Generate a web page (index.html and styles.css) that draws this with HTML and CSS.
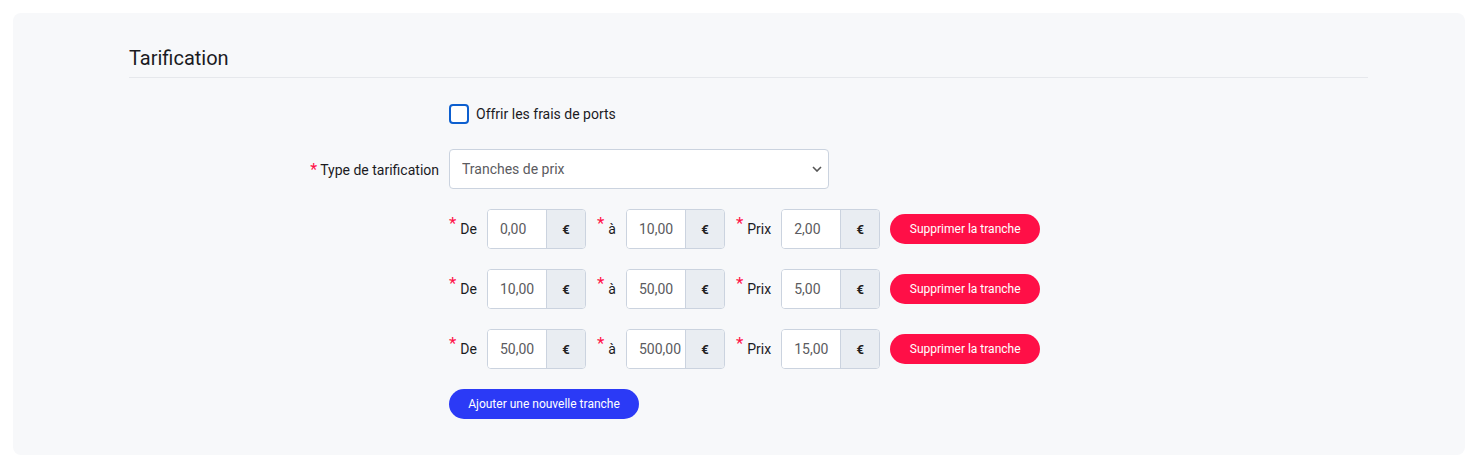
FILE: index.html
```html
<!DOCTYPE html>
<html lang="fr">
<head>
<meta charset="utf-8">
<title>Tarification</title>
<link rel="stylesheet" href="styles.css">
</head>
<body>
<div class="panel">
  <div class="content">
    <h2 class="title">Tarification</h2>
    <div class="form">
      <div class="row row-check">
        <div class="label-col"></div>
        <label class="check">
          <input type="checkbox" class="checkbox">
          <span>Offrir les frais de ports</span>
        </label>
      </div>
      <div class="row row-select">
        <div class="label-col"><span class="req">*</span>Type de tarification</div>
        <div class="select-wrap">
          <select class="select">
            <option>Tranches de prix</option>
          </select>
          <svg class="chev" width="10" height="6" viewBox="0 0 10 6"><path d="M1 1l4 4 4-4" fill="none" stroke="#555" stroke-width="1.6"/></svg>
        </div>
      </div>

      <div class="row">
        <div class="label-col"></div>
        <div class="tranche">
          <div class="field"><span class="flabel"><span class="sreq">*</span>De</span><div class="group"><input class="num" value="0,00"><span class="addon">€</span></div></div>
          <div class="field"><span class="flabel"><span class="sreq">*</span>à</span><div class="group"><input class="num" value="10,00"><span class="addon">€</span></div></div>
          <div class="field"><span class="flabel"><span class="sreq">*</span>Prix</span><div class="group"><input class="num" value="2,00"><span class="addon">€</span></div></div>
          <button class="btn btn-red">Supprimer la tranche</button>
        </div>
      </div>
      <div class="row">
        <div class="label-col"></div>
        <div class="tranche">
          <div class="field"><span class="flabel"><span class="sreq">*</span>De</span><div class="group"><input class="num" value="10,00"><span class="addon">€</span></div></div>
          <div class="field"><span class="flabel"><span class="sreq">*</span>à</span><div class="group"><input class="num" value="50,00"><span class="addon">€</span></div></div>
          <div class="field"><span class="flabel"><span class="sreq">*</span>Prix</span><div class="group"><input class="num" value="5,00"><span class="addon">€</span></div></div>
          <button class="btn btn-red">Supprimer la tranche</button>
        </div>
      </div>
      <div class="row">
        <div class="label-col"></div>
        <div class="tranche">
          <div class="field"><span class="flabel"><span class="sreq">*</span>De</span><div class="group"><input class="num" value="50,00"><span class="addon">€</span></div></div>
          <div class="field"><span class="flabel"><span class="sreq">*</span>à</span><div class="group"><input class="num" value="500,00"><span class="addon">€</span></div></div>
          <div class="field"><span class="flabel"><span class="sreq">*</span>Prix</span><div class="group"><input class="num" value="15,00"><span class="addon">€</span></div></div>
          <button class="btn btn-red">Supprimer la tranche</button>
        </div>
      </div>
      <div class="row">
        <div class="label-col"></div>
        <button class="btn btn-blue">Ajouter une nouvelle tranche</button>
      </div>
    </div>
  </div>
</div>
</body>
</html>
```

FILE: styles.css
```css
* { box-sizing: border-box; }
html, body { margin: 0; background: #fff; }
body {
  padding: 13px 13px 0 13px;
  font-family: Roboto, "Liberation Sans", Arial, sans-serif;
  color: #1b1b1f;
}
.panel {
  background: #f7f8fa;
  border-radius: 8px;
  height: 442px;
  padding: 33px 97px 0 116px;
}
.title {
  margin: 0;
  font-size: 20px;
  font-weight: 400;
  line-height: 24px;
  padding-bottom: 7px;
  border-bottom: 1px solid #e6e8ec;
  color: #1b1b1f;
}
.form {
  display: flex;
  flex-direction: column;
  margin-top: 26px;
}
.row {
  display: flex;
  align-items: center;
}
.label-col {
  width: 320px;
  flex: none;
  padding-right: 10px;
  text-align: right;
  font-size: 14px;
}
.row-check { height: 20px; }
.row-select { margin-top: 25px; margin-bottom: 20px; }
.row:nth-child(n+4) { margin-top: 20px; }
.check {
  display: flex;
  align-items: center;
  gap: 7px;
  font-size: 14px;
  cursor: pointer;
}
.checkbox {
  appearance: none;
  -webkit-appearance: none;
  margin: 0;
  width: 20px;
  height: 20px;
  border: 2px solid #0d5fcf;
  border-radius: 4px;
  background: #fff;
}
.req {
  color: #ff1048;
  font-size: 16px;
  margin-right: 3px;
}
.select-wrap {
  position: relative;
  width: 380px;
  height: 40px;
}
.select {
  appearance: none;
  -webkit-appearance: none;
  width: 100%;
  height: 40px;
  border: 1px solid #cbd3df;
  border-radius: 4px;
  background: #fff;
  padding: 0 12px;
  font-family: inherit;
  font-size: 14px;
  color: #5b5b60;
}
.chev {
  position: absolute;
  right: 7px;
  top: 17px;
}
.tranche {
  display: flex;
  align-items: center;
  gap: 11px;
}
.field {
  display: flex;
  align-items: center;
  gap: 10px;
}
.flabel {
  font-size: 14px;
  display: flex;
  align-items: flex-start;
  padding-top: 1px;
}
.sreq {
  color: #ff1048;
  font-size: 17px;
  line-height: 1;
  margin-right: 4px;
  position: relative;
  top: -6px;
}
.group {
  display: flex;
  height: 40px;
  border: 1px solid #cbd3df;
  border-radius: 4px;
  overflow: hidden;
  background: #fff;
}
.num {
  width: 58px;
  border: 0;
  padding: 0 0 0 12px;
  font-family: inherit;
  font-size: 14px;
  color: #5b5b60;
  background: #fff;
  outline: none;
}
.addon {
  width: 39px;
  background: #e9edf2;
  border-left: 1px solid #cbd3df;
  display: flex;
  align-items: center;
  justify-content: center;
  font-size: 13px;
  font-weight: 700;
  color: #222;
}
.btn {
  border: 0;
  height: 30px;
  border-radius: 15px;
  color: #fff;
  font-family: inherit;
  font-size: 12px;
  font-weight: 400;
  cursor: pointer;
}
.btn-red {
  background: #ff0f47;
  width: 150px;
  margin-left: -1px;
}
.btn-blue {
  background: #2b3af6;
  width: 190px;
}
```
